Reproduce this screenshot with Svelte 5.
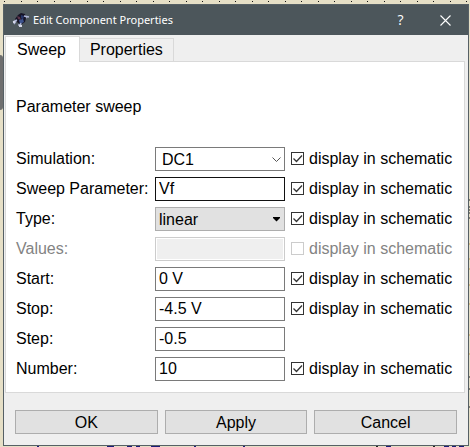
<script>
  const rows = $state([
    { id: 'simulation', label: 'Simulation:', kind: 'combo', value: 'DC1', options: ['DC1'], shown: true },
    { id: 'parameter', label: 'Sweep Parameter:', kind: 'text', value: 'Vf', shown: true, active: true },
    { id: 'type', label: 'Type:', kind: 'list', value: 'linear', options: ['linear', 'logarithmic', 'list', 'constant'], shown: true },
    { id: 'values', label: 'Values:', kind: 'text', value: '', shown: false, disabled: true },
    { id: 'start', label: 'Start:', kind: 'text', value: '0 V', shown: true },
    { id: 'stop', label: 'Stop:', kind: 'text', value: '-4.5 V', shown: true },
    { id: 'step', label: 'Step:', kind: 'text', value: '-0.5', noDisplay: true },
    { id: 'number', label: 'Number:', kind: 'text', value: '10', shown: true }
  ]);
</script>

<div class="desktop">
  <div class="scroll-thumb"></div>
  <svg class="marks right" width="2" height="250" aria-hidden="true">
    <path d="M0 6h2M0 13h2M0 16h2M0 19h2M0 24h2M0 183h2M0 195h2M0 213h2" stroke="#222" />
    <path d="M0 50h2M0 65h2M0 75h2M0 91h2M0 110h2M0 141h2M0 160h2" stroke="#c9a04e" />
  </svg>
  <svg class="marks bottom" width="470" height="2" aria-hidden="true">
    <path d="M37 1h2M107 1h7M127 1h5M136 1h4M151 1h9M194 1h2M243 1h2M386 1h5M444 1h5M452 1h4M459 1h5" stroke="#1c1c78" stroke-width="2" />
    <path d="M376 1h2M433 1h2" stroke="#222" stroke-width="2" />
  </svg>

  <section class="window" aria-label="Edit Component Properties">
    <header>
      <svg class="logo" width="18" height="18" viewBox="0 0 18 18" aria-hidden="true">
        <path d="M3 8 6 4l3-2 4 1 1 4-1 4-3 2-4-1z" fill="#161326" />
        <path d="m5 5 3 1 1 3-3-1z" fill="#593449" />
        <path d="m9 4 3 1-1 4-2-2z" fill="#263568" />
        <path d="m7 9 4-1 1 3-4 2z" fill="#3c538d" />
        <path d="m1 11 4-2M2 13l2-3M7 13v2M9 12l-1 3M12 5l5 1M14 7l1-1" stroke="#aeb5d5" stroke-width="1.4" />
        <path d="M7 14h3v2H7zM1 10h2v2H1z" fill="#d4d7e7" />
      </svg>
      <h1>Edit Component Properties</h1>
      <button class="caption" aria-label="Help">?</button>
      <button class="caption" aria-label="Close">
        <svg width="11" height="11" viewBox="0 0 11 11"><path d="m.5.5 10 10m0-10-10 10" stroke="#fff" stroke-width="1.1" /></svg>
      </button>
    </header>

    <div class="body">
      <div class="tabs" role="tablist">
        <button class="tab current" role="tab" aria-selected="true">Sweep</button>
        <button class="tab" role="tab" aria-selected="false">Properties</button>
      </div>
      <div class="pane" role="tabpanel">
        <h2>Parameter sweep</h2>
        {#each rows as row (row.id)}
          <div class="row" class:disabled={row.disabled}>
            <label class="name" for={row.id}>{row.label}</label>
            {#if row.kind === 'text'}
              <input class="field" class:active={row.active} id={row.id} type="text" bind:value={row.value} disabled={row.disabled} />
            {:else}
              <div class="select">
                <select class="field {row.kind}" id={row.id} bind:value={row.value}>
                  {#each row.options as option}<option>{option}</option>{/each}
                </select>
                {#if row.kind === 'combo'}
                  <svg width="9" height="5" viewBox="0 0 9 5"><path d="m.5.5 4 4 4-4" fill="none" stroke="#555" /></svg>
                {:else}
                  <svg width="9" height="5" viewBox="0 0 9 5"><path d="M1 0h7v1L4.500 4.500 1 1z" /></svg>
                {/if}
              </div>
            {/if}
            {#if !row.noDisplay}
              <label class="check">
                <span class="box">
                  <input type="checkbox" bind:checked={row.shown} disabled={row.disabled} />
                  {#if row.shown}
                    <svg width="13" height="13" viewBox="0 0 13 13"><path d="m2.500 6.500 3 3 5.500-6" fill="none" stroke="#333" stroke-width="1.300" /></svg>
                  {/if}
                </span>
                display in schematic
              </label>
            {/if}
          </div>
        {/each}
      </div>
      <footer>
        <button class="push">OK</button>
        <button class="push">Apply</button>
        <button class="push">Cancel</button>
      </footer>
    </div>
  </section>
</div>

<style>
  :global(body) { margin: 0; }
  * { box-sizing: border-box; }
  .desktop {
    position: relative;
    min-height: 100vh;
    padding: 4px 1px 1px 3px;
    overflow: hidden;
    font: 16px/24px "Liberation Sans", Arial, sans-serif;
    color: #000;
    background-color: #e6dfc6;
    background-image: linear-gradient(90deg, #111 1px, transparent 1px 17px, #111 17px 18px, transparent 18px);
    background-size: 33px 1px;
    background-position: 4px 1px;
    background-repeat: repeat-x;
  }
  .scroll-thumb {
    position: absolute;
    left: 0;
    top: 55px;
    width: 3px;
    height: 55px;
    background: #6f6f6f;
    border-radius: 0 3px 3px 0;
  }
  .marks { position: absolute; }
  .right { right: 0; top: 194px; }
  .bottom { left: 0; bottom: 0; }
  .window {
    position: relative;
    border: 1px solid #566065;
    background: #efefef;
  }
  header {
    display: flex;
    align-items: center;
    height: 30px;
    padding-left: 8px;
    color: #fff;
    background: #4c565b;
  }
  h1 {
    flex: 1;
    margin: 0 0 0 3px;
    font: 11px/16px "Noto Sans", "Open Sans", sans-serif;
  }
  button { font: inherit; color: inherit; }
  .caption {
    display: flex;
    align-items: center;
    justify-content: center;
    width: 45px;
    height: 30px;
    padding: 0;
    border: 0;
    background: none;
    font: 14px/16px "Open Sans", "Noto Sans", sans-serif;
  }
  .body { padding: 1px 3px 11px 1px; }
  .tabs {
    display: flex;
    align-items: flex-end;
    height: 25px;
  }
  .tab {
    height: 23px;
    padding: 0 10px;
    border: 1px solid #d9d9d9;
    border-left: 0;
    border-bottom: 0;
    line-height: 22px;
    background: #efefef;
  }
  .tab.current {
    position: relative;
    height: 26px;
    margin-bottom: -1px;
    padding: 0 13px 0 11px;
    border-left: 1px solid #d9d9d9;
    background: #fff;
  }
  .pane {
    padding: 33px 10px 8px;
    border: 1px solid #d9d9d9;
    background: #fff;
  }
  h2 {
    margin: 0 0 25px;
    font: inherit;
  }
  .row {
    display: grid;
    grid-template-columns: 133px 130px 1fr;
    column-gap: 6px;
    height: 30px;
    align-items: center;
    white-space: nowrap;
  }
  .disabled { color: #838383; }
  .select { position: relative; }
  .select svg {
    position: absolute;
    right: 4px;
    top: 10px;
    pointer-events: none;
  }
  .field {
    display: block;
    width: 100%;
    height: 24px;
    margin: 0;
    padding: 0 3px;
    border: 1px solid #7a7a7a;
    border-radius: 0;
    outline: 0;
    appearance: none;
    font: inherit;
    color: #000;
    background: #fff;
  }
  .field.active { border-color: #111; }
  .field.combo { padding-left: 6px; }
  .field.list {
    border-color: #adadad;
    background: #e1e1e1;
  }
  .field:disabled {
    border-color: #ccc;
    background: #efefef;
    box-shadow: inset 0 0 0 1px #fff;
  }
  .check {
    display: flex;
    align-items: center;
    gap: 5px;
  }
  .box {
    position: relative;
    width: 13px;
    height: 13px;
    margin-bottom: 1px;
  }
  .box input {
    display: block;
    width: 13px;
    height: 13px;
    margin: 0;
    border: 1px solid #333;
    appearance: none;
    background: #fff;
  }
  .box input:disabled { border-color: #ccc; }
  .box svg {
    position: absolute;
    inset: 0;
    pointer-events: none;
  }
  footer {
    display: flex;
    gap: 7px;
    padding: 17px 8px 0 10px;
  }
  .push {
    flex: 1;
    height: 24px;
    padding: 0;
    border: 1px solid #adadad;
    background: #e1e1e1;
  }
</style>
